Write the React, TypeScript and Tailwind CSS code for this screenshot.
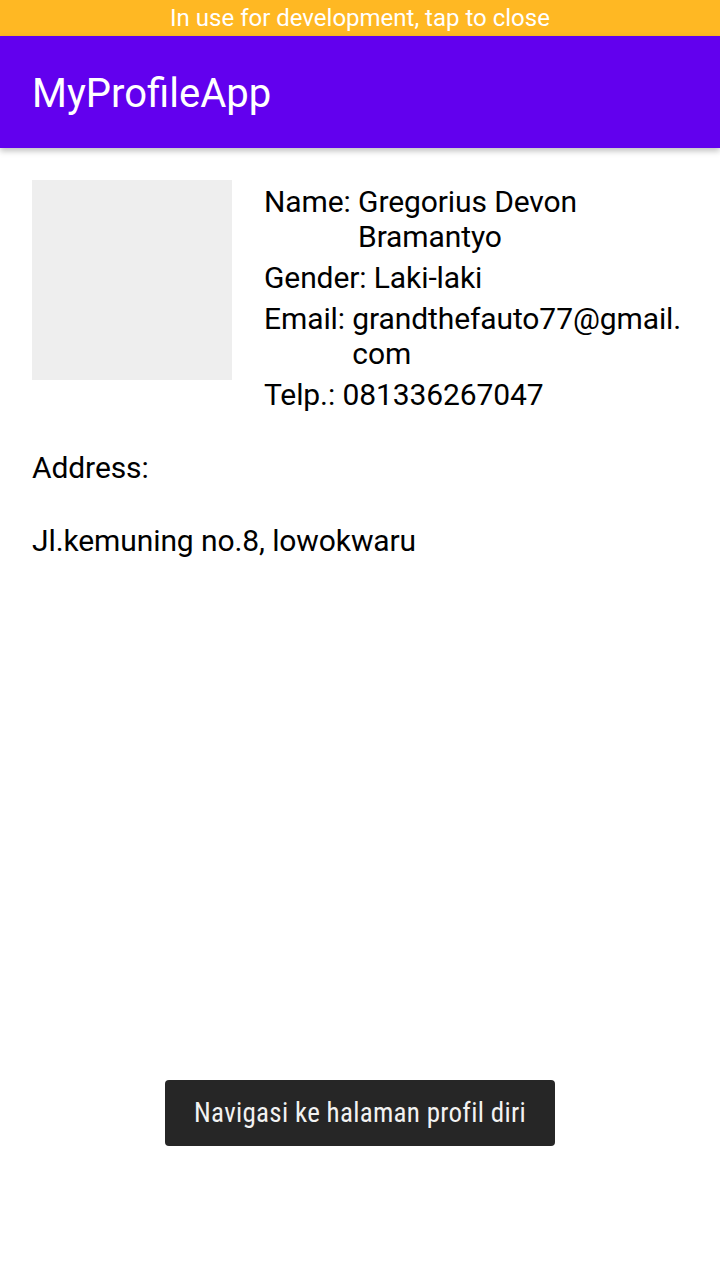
export default function App() {
  const font = { fontFamily: 'Roboto, "Noto Sans", sans-serif' }

  return (
    <div className="w-[720px] h-[1280px] bg-white relative overflow-hidden" style={font}>
      <div className="h-[36px] bg-[#ffb823] flex items-center justify-center">
        <span className="text-[24px] text-white leading-none">
          In use for development, tap to close
        </span>
      </div>

      <header className="h-[112px] bg-[#6200ee] flex items-center px-[32px] pt-[3px] shadow-[0_3px_6px_rgba(0,0,0,0.25)] relative z-10">
        <h1 className="text-[40px] text-white leading-none">MyProfileApp</h1>
      </header>

      <main className="px-[32px] pt-[32px] text-black text-[30px] leading-[35px] tracking-[-0.1px]">
        <div className="flex gap-[32px]">
          <div className="w-[200px] h-[200px] bg-[#eeeeee] shrink-0" />
          <div className="flex flex-col gap-[6px] pt-[4px] flex-1">
            <div className="flex">
              <span className="shrink-0">Name:&nbsp;</span>
              <span>Gregorius Devon Bramantyo</span>
            </div>
            <div className="flex">
              <span>Gender:&nbsp;</span>
              <span>Laki-laki</span>
            </div>
            <div className="flex">
              <span className="shrink-0">Email:&nbsp;</span>
              <span className="whitespace-nowrap">
                grandthefauto77@gmail.
                <br />
                com
              </span>
            </div>
            <div className="flex">
              <span>Telp.:&nbsp;</span>
              <span>081336267047</span>
            </div>
          </div>
        </div>

        <p className="mt-[38px]">Address:</p>
        <p className="mt-[38px]">Jl.kemuning no.8, lowokwaru</p>
      </main>

      <div className="absolute left-0 right-0 top-[1080px] flex justify-center">
        <div className="h-[66px] px-[29px] bg-[#262626] rounded-[4px] flex items-center">
          <span className="text-[27px] text-[#f2f2f2] leading-none tracking-[0.3px] [font-stretch:condensed]">
            Navigasi ke halaman profil diri
          </span>
        </div>
      </div>
    </div>
  )
}
